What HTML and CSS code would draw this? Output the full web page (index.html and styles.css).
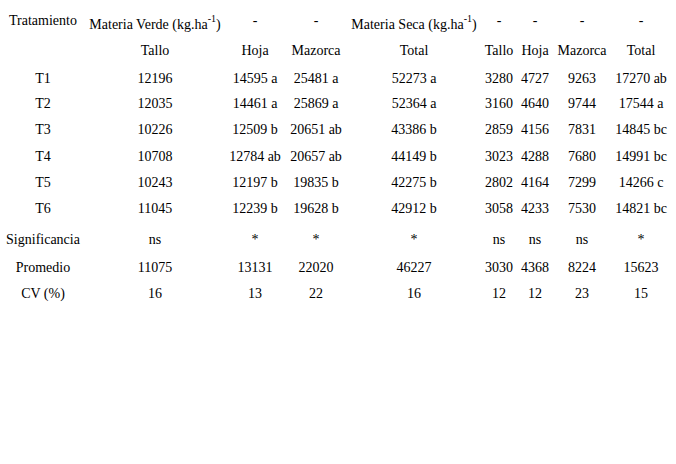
FILE: index.html
```html
<!DOCTYPE html>
<html lang="es">
<head>
<meta charset="utf-8">
<title>Tabla</title>
<link rel="stylesheet" href="styles.css">
</head>
<body>
<div class="tbl">
  <div class="c">Tratamiento</div>
  <div class="c low"><span>Materia Verde (kg.ha<sup>-1</sup>)</span></div>
  <div class="c">-</div>
  <div class="c">-</div>
  <div class="c low"><span>Materia Seca (kg.ha<sup>-1</sup>)</span></div>
  <div class="c">-</div>
  <div class="c">-</div>
  <div class="c">-</div>
  <div class="c">-</div>

  <div class="c"></div>
  <div class="c">Tallo</div>
  <div class="c">Hoja</div>
  <div class="c">Mazorca</div>
  <div class="c">Total</div>
  <div class="c">Tallo</div>
  <div class="c">Hoja</div>
  <div class="c">Mazorca</div>
  <div class="c">Total</div>

  <div class="c">T1</div><div class="c">12196</div><div class="c">14595 a</div><div class="c">25481 a</div><div class="c">52273 a</div><div class="c">3280</div><div class="c">4727</div><div class="c">9263</div><div class="c">17270 ab</div>
  <div class="c">T2</div><div class="c">12035</div><div class="c">14461 a</div><div class="c">25869 a</div><div class="c">52364 a</div><div class="c">3160</div><div class="c">4640</div><div class="c">9744</div><div class="c">17544 a</div>
  <div class="c">T3</div><div class="c">10226</div><div class="c">12509 b</div><div class="c">20651 ab</div><div class="c">43386 b</div><div class="c">2859</div><div class="c">4156</div><div class="c">7831</div><div class="c">14845 bc</div>
  <div class="c">T4</div><div class="c">10708</div><div class="c">12784 ab</div><div class="c">20657 ab</div><div class="c">44149 b</div><div class="c">3023</div><div class="c">4288</div><div class="c">7680</div><div class="c">14991 bc</div>
  <div class="c">T5</div><div class="c">10243</div><div class="c">12197 b</div><div class="c">19835 b</div><div class="c">42275 b</div><div class="c">2802</div><div class="c">4164</div><div class="c">7299</div><div class="c">14266 c</div>
  <div class="c">T6</div><div class="c">11045</div><div class="c">12239 b</div><div class="c">19628 b</div><div class="c">42912 b</div><div class="c">3058</div><div class="c">4233</div><div class="c">7530</div><div class="c">14821 bc</div>
  <div class="c">Significancia</div><div class="c">ns</div><div class="c">*</div><div class="c">*</div><div class="c">*</div><div class="c">ns</div><div class="c">ns</div><div class="c">ns</div><div class="c">*</div>
  <div class="c">Promedio</div><div class="c">11075</div><div class="c">13131</div><div class="c">22020</div><div class="c">46227</div><div class="c">3030</div><div class="c">4368</div><div class="c">8224</div><div class="c">15623</div>
  <div class="c">CV (%)</div><div class="c">16</div><div class="c">13</div><div class="c">22</div><div class="c">16</div><div class="c">12</div><div class="c">12</div><div class="c">23</div><div class="c">15</div>
</div>
</body>
</html>
```
FILE: styles.css
```css
html, body {
  margin: 0;
  padding: 0;
  background: #fff;
}
body {
  font-family: "Liberation Serif", "Times New Roman", serif;
  font-size: 14px;
  color: #000;
}
.tbl {
  display: grid;
  grid-template-columns: 86px 138px 62px 60px 136px 34px 38px 56px 62px;
  grid-template-rows: 30px 30px 25px 26px 26px 27px 26px 26px 36px 20px 32px;
  padding-top: 6px;
  width: 672px;
}
.c {
  display: flex;
  align-items: center;
  justify-content: center;
  white-space: nowrap;
  line-height: 16px;
}
.low {
  padding-top: 8px;
}
sup {
  font-size: 10px;
  line-height: 0;
  vertical-align: 7px;
}
```
